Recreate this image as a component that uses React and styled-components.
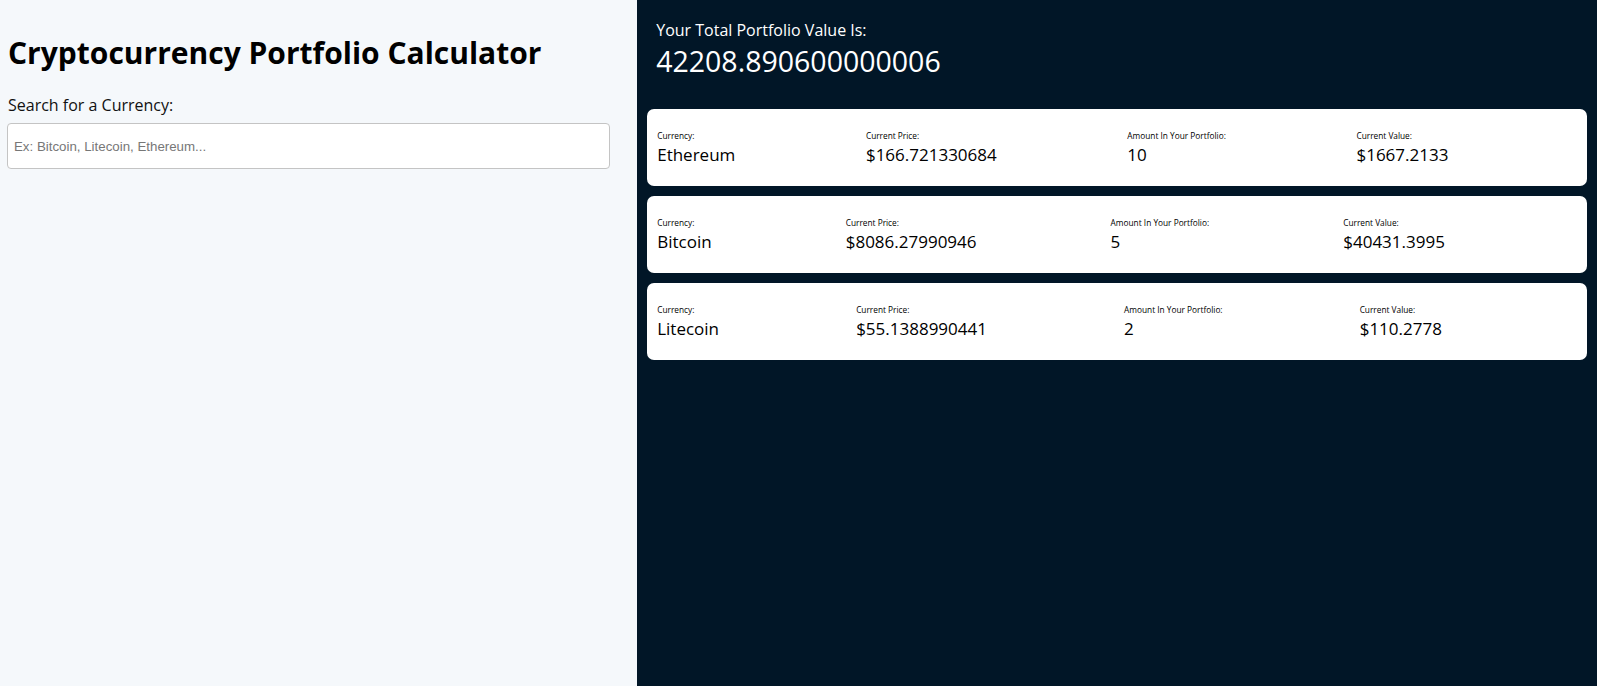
import React from 'react';
import styled, { createGlobalStyle } from 'styled-components';

const GlobalStyle = createGlobalStyle`
  * {
    box-sizing: border-box;
  }
  body {
    margin: 0;
    font-family: 'Open Sans', 'Noto Sans', sans-serif;
  }
`;

const Container = styled.main`
  display: flex;
  width: 100vw;
  height: 100vh;
`;

const SearchPanel = styled.section`
  width: 39.9%;
  padding: 8px 8px 8px 7px;
  background-color: #f5f8fb;
`;

const Title = styled.h1`
  margin: 24px 0 21px 1px;
  font-size: 30px;
  font-weight: 700;
  color: #000;
`;

const SearchLabel = styled.label`
  display: block;
  margin: 0 0 7px 1px;
  font-size: 16px;
  color: #111;
`;

const SearchInput = styled.input`
  width: calc(100% - 19px);
  height: 46px;
  padding: 0 6px;
  border: 1px solid #c4c4c4;
  border-radius: 4px;
  background: #fff;
  font-family: 'Liberation Sans', Arial, sans-serif;
  font-size: 13.3px;
  &::placeholder {
    color: #777;
  }
`;

const PortfolioPanel = styled.section`
  flex: 1;
  padding: 19px 10px 0;
  background-color: #011627;
  color: #fff;
`;

const TotalLabel = styled.p`
  margin: 0 9px;
  font-size: 16px;
`;

const TotalValue = styled.p`
  margin: 1px 9px 29px;
  font-size: 28.5px;
  font-weight: 400;
`;

const Coins = styled.div`
  display: flex;
  flex-direction: column;
  gap: 10px;
`;

const Coin = styled.article`
  height: 77px;
  padding: 0 8px 0 10px;
  border-radius: 7px;
  background-color: #fff;
  color: #000;
  display: flex;
  justify-content: space-between;
  align-items: center;
`;

const Field = styled.div`
  display: flex;
  flex-direction: column;
`;

const FieldLabel = styled.span`
  font-size: 8.3px;
  line-height: 14px;
`;

const FieldValue = styled.span`
  font-size: 17px;
  line-height: 24px;
`;

// empty slot at the end of each row keeps the columns off the right edge
const Spacer = styled.span`
  width: 0;
`;

const coins = [
  { name: 'Ethereum', price: '166.721330684', amount: 10, value: '1667.2133' },
  { name: 'Bitcoin', price: '8086.27990946', amount: 5, value: '40431.3995' },
  { name: 'Litecoin', price: '55.1388990441', amount: 2, value: '110.2778' },
];

const App = () => {
  return (
    <Container>
      <GlobalStyle />
      <SearchPanel>
        <Title>Cryptocurrency Portfolio Calculator</Title>
        <SearchLabel htmlFor="search">Search for a Currency:</SearchLabel>
        <SearchInput id="search" placeholder="Ex: Bitcoin, Litecoin, Ethereum..." />
      </SearchPanel>
      <PortfolioPanel>
        <TotalLabel>Your Total Portfolio Value Is:</TotalLabel>
        <TotalValue>42208.890600000006</TotalValue>
        <Coins>
          {coins.map((c) => (
            <Coin key={c.name}>
              <Field>
                <FieldLabel>Currency:</FieldLabel>
                <FieldValue>{c.name}</FieldValue>
              </Field>
              <Field>
                <FieldLabel>Current Price:</FieldLabel>
                <FieldValue>${c.price}</FieldValue>
              </Field>
              <Field>
                <FieldLabel>Amount In Your Portfolio:</FieldLabel>
                <FieldValue>{c.amount}</FieldValue>
              </Field>
              <Field>
                <FieldLabel>Current Value:</FieldLabel>
                <FieldValue>${c.value}</FieldValue>
              </Field>
              <Spacer />
            </Coin>
          ))}
        </Coins>
      </PortfolioPanel>
    </Container>
  );
};

export default App;
